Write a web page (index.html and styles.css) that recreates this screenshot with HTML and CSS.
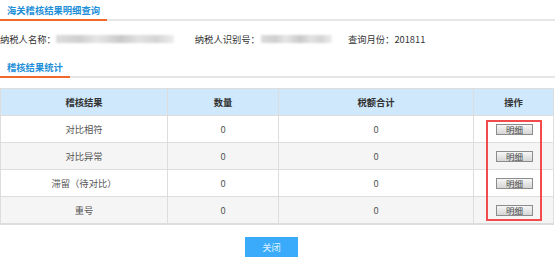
FILE: index.html
```html
<!DOCTYPE html>
<html lang="zh-CN">
<head>
  <meta charset="UTF-8">
  <title>海关稽核结果明细查询</title>
  <link rel="stylesheet" href="styles.css">
</head>
<body>
  <div class="section-title"><span>海关稽核结果明细查询</span></div>

  <div class="info-row">
    <span class="label">纳税人名称：</span><span class="masked masked-name"></span>
    <span class="label">纳税人识别号：</span><span class="masked masked-id"></span>
    <span class="label">查询月份：201811</span>
  </div>

  <div class="section-title second"><span>稽核结果统计</span></div>

  <table class="result-table">
    <thead>
      <tr>
        <th class="col-result">稽核结果</th>
        <th class="col-count">数量</th>
        <th class="col-tax">税额合计</th>
        <th class="col-op">操作</th>
      </tr>
    </thead>
    <tbody>
      <tr>
        <td>对比相符</td>
        <td>0</td>
        <td>0</td>
        <td><button class="detail-btn">明细</button></td>
      </tr>
      <tr>
        <td>对比异常</td>
        <td>0</td>
        <td>0</td>
        <td><button class="detail-btn">明细</button></td>
      </tr>
      <tr>
        <td>滞留（待对比）</td>
        <td>0</td>
        <td>0</td>
        <td><button class="detail-btn">明细</button></td>
      </tr>
      <tr>
        <td>重号</td>
        <td>0</td>
        <td>0</td>
        <td><button class="detail-btn">明细</button></td>
      </tr>
    </tbody>
  </table>

  <div class="mark-box"></div>

  <div class="actions">
    <button class="close-btn">关闭</button>
  </div>
</body>
</html>
```

FILE: styles.css
```css
body {
  margin: 0;
  font-family: "Noto Sans CJK SC", "DejaVu Sans", sans-serif;
  font-size: 9.3px;
  color: #333;
  background-color: #fff;
  position: relative;
}
.section-title {
  padding-top: 1px;
  border-bottom: 2px solid #e6e6e6;
  height: 18px;
}
.section-title span {
  display: inline-block;
  padding: 0 7px;
  line-height: 18px;
  color: #1e8fd8;
  font-weight: bold;
  border-bottom: 2px solid #f2672a;
}
.section-title.second {
  margin-top: 8px;
}
.info-row {
  margin-top: 8px;
  height: 20px;
  line-height: 20px;
  display: flex;
  align-items: center;
}
.masked {
  display: inline-block;
  height: 8px;
  background: linear-gradient(90deg, #ddd, #cfcfcf 20%, #e6e6e6 35%, #c9c9c9 55%, #e2e2e2 70%, #d4d4d4 85%, #eee);
  filter: blur(1px);
}
.masked-name {
  width: 118px;
  margin-right: 21px;
}
.masked-id {
  width: 71px;
  margin-left: 1px;
  margin-right: 16px;
}
.result-table {
  margin-top: 10px;
  width: 554px;
  border-collapse: collapse;
  border: 1px solid #ddd;
  border-bottom-width: 2px;
}
.result-table th, .result-table td {
  border: 1px solid #ddd;
  text-align: center;
  height: 26px;
  padding: 0;
}
.result-table th {
  background-color: #cfe8fc;
  color: #333;
  font-weight: bold;
}
.result-table td {
  color: #555;
}
.result-table tbody tr:nth-child(even) td {
  background-color: #f5f5f5;
}
.col-result { width: 166px; }
.col-count { width: 110px; }
.col-tax { width: 194px; }
.detail-btn {
  font-family: inherit;
  font-size: 8.5px;
  color: #444;
  width: 37px;
  height: 11px;
  line-height: 9px;
  padding: 0;
  border: 1px solid #8c8c8c;
  background: linear-gradient(#f6f6f6, #d6d6d6);
  margin-left: 2px;
}
.mark-box {
  position: absolute;
  left: 486px;
  top: 120px;
  width: 52px;
  height: 97px;
  border: 2px solid #f24b4b;
}
.actions {
  margin-top: 12px;
  text-align: center;
  padding-right: 12px;
}
.close-btn {
  font-family: inherit;
  font-size: 9.3px;
  width: 53px;
  height: 20px;
  border: none;
  background-color: #3aabfa;
  color: #dff1ff;
}
```
